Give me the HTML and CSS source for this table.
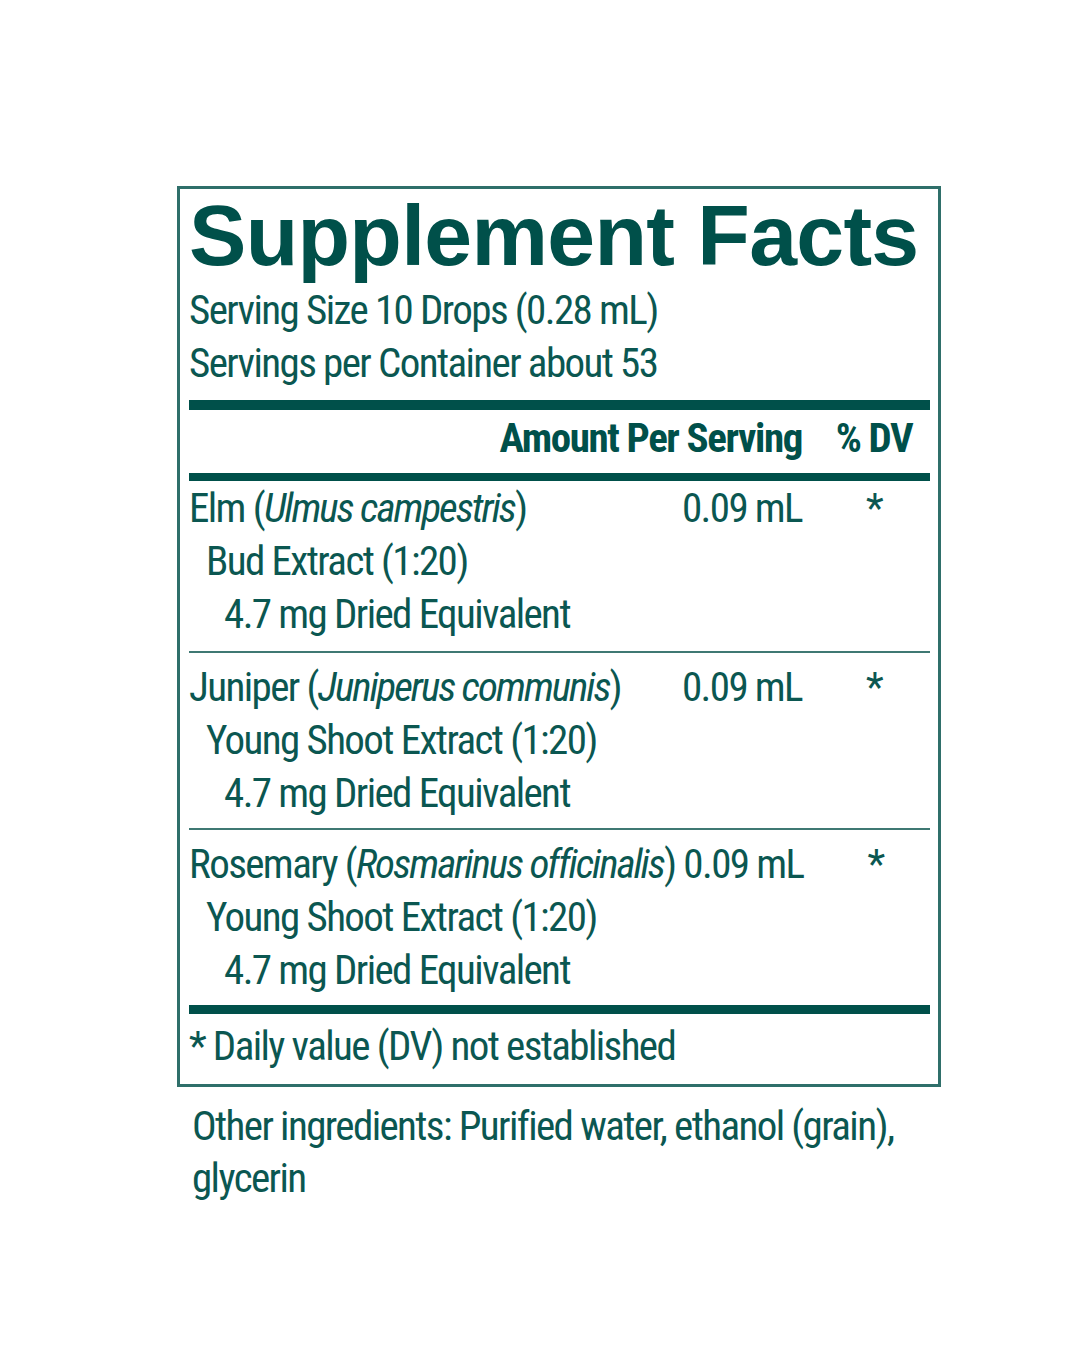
FILE: index.html
```html
<!DOCTYPE html>
<html lang="en">
<head>
<meta charset="utf-8">
<title>Supplement Facts</title>
<link rel="stylesheet" href="styles.css">
</head>
<body>
<main class="page">
  <section class="facts">
    <h1 class="facts-title">Supplement Facts</h1>
    <p class="line">Serving Size 10 Drops (0.28 mL)</p>
    <p class="line">Servings per Container about 53</p>
    <div class="bar bar-thick"></div>
    <div class="head-row">
      <span class="col-amount">Amount Per Serving</span>
      <span class="col-dv">% DV</span>
    </div>
    <div class="bar bar-mid"></div>
    <div class="ing-row first">
      <div class="ing-name">
        <div class="line">Elm (<i>Ulmus campestris</i>)</div>
        <div class="line indent1">Bud Extract (1:20)</div>
        <div class="line indent2">4.7 mg Dried Equivalent</div>
      </div>
      <div class="line col-amount">0.09 mL</div>
      <div class="line col-dv">*</div>
    </div>
    <div class="rule"></div>
    <div class="ing-row">
      <div class="ing-name">
        <div class="line">Juniper (<i>Juniperus communis</i>)</div>
        <div class="line indent1">Young Shoot Extract (1:20)</div>
        <div class="line indent2">4.7 mg Dried Equivalent</div>
      </div>
      <div class="line col-amount">0.09 mL</div>
      <div class="line col-dv">*</div>
    </div>
    <div class="rule"></div>
    <div class="ing-row">
      <div class="ing-name">
        <div class="line">Rosemary (<i>Rosmarinus officinalis</i>)</div>
        <div class="line indent1">Young Shoot Extract (1:20)</div>
        <div class="line indent2">4.7 mg Dried Equivalent</div>
      </div>
      <div class="line col-amount">0.09 mL</div>
      <div class="line col-dv">*</div>
    </div>
    <div class="bar bar-thick bar-bottom"></div>
    <p class="line footnote">* Daily value (DV) not established</p>
  </section>
  <p class="other">Other ingredients: Purified water, ethanol (grain), glycerin</p>
</main>
</body>
</html>
```
FILE: styles.css
```css
html, body {
  margin: 0;
  padding: 0;
  background: #ffffff;
}

*, *::before, *::after {
  box-sizing: border-box;
}

.page {
  padding: 186px 0 0 177px;
  font-family: "Roboto Condensed", "DejaVu Sans Condensed", "Liberation Sans", sans-serif;
  font-stretch: condensed;
  color: #0b5751;
}

.facts {
  width: 764px;
  border: 3px solid #2f6f6a;
  padding: 1px 8px 11px 9px;
}

.facts-title {
  margin: 0 0 4px 0;
  font-family: "Liberation Sans", Arial, sans-serif;
  font-stretch: normal;
  font-weight: 700;
  font-size: 86px;
  line-height: 90px;
  letter-spacing: -0.7px;
  color: #00504a;
}

.line {
  margin: 0;
  font-size: 41px;
  line-height: 53px;
  letter-spacing: -1.6px;
  white-space: nowrap;
}

.line i {
  letter-spacing: -2px;
}

.bar {
  background: #00504a;
}

.bar-thick {
  height: 10px;
  margin-top: 10px;
}

.bar-mid {
  height: 8px;
}

.bar-bottom {
  margin-top: 0;
  height: 9px;
}

.head-row {
  display: grid;
  grid-template-columns: 1fr 128px;
  padding: 2px 0 8px;
  font-size: 41px;
  line-height: 53px;
  font-weight: 700;
  letter-spacing: -1.4px;
  color: #00504a;
}

.head-row .col-amount {
  text-align: right;
}

.col-dv {
  text-align: center;
  padding-left: 16px;
}

.ing-row {
  display: grid;
  grid-template-columns: 1fr auto 128px;
  align-items: start;
  padding: 8px 0 8px;
}

.ing-row.first {
  padding-top: 1px;
  padding-bottom: 10px;
}

.ing-row .col-amount {
  padding-left: 8px;
}

.indent1 {
  padding-left: 17px;
}

.indent2 {
  padding-left: 35px;
}

.rule {
  height: 2px;
  background: #3f7873;
}

.footnote {
  padding-top: 6px;
}

.other {
  width: 745px;
  margin: 13px 0 0 15px;
  font-size: 41px;
  line-height: 52px;
  letter-spacing: -1.6px;
}
```
